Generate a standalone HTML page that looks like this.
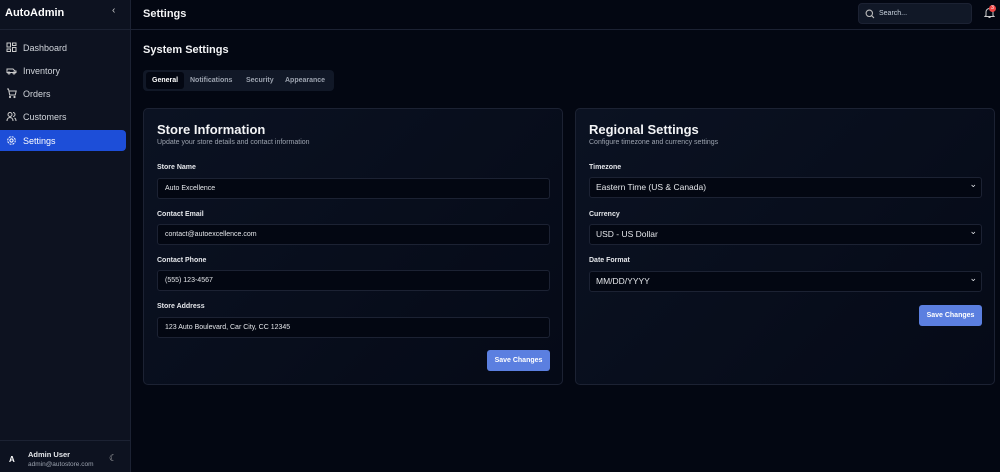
<!DOCTYPE html><html><head><style>
*{box-sizing:border-box;margin:0;padding:0}
body{width:1000px;height:472px;overflow:hidden;background:#030712;font-family:"Liberation Sans",sans-serif;color:#e5e7eb;position:relative}
.sb{position:absolute;left:0;top:0;width:131px;height:472px;background:#0d1220;border-right:1px solid #1c2233}
.abs{position:absolute}
.nav{position:absolute;left:0;width:126px;height:21px;border-radius:0 4px 4px 0;font-size:9px;color:#d1d5db;display:flex;align-items:center;padding-left:23px}
.nav svg{position:absolute;left:6px;top:5px}
.card{position:absolute;top:108px;height:277px;width:420px;border:1px solid #1c2233;border-radius:5px;background:linear-gradient(135deg,#0b1222,#050a17)}
.card h2{position:absolute;left:13px;top:13px;font-size:13px;font-weight:bold;color:#f3f4f6}
.card .sub{position:absolute;left:13px;top:30px;font-size:7px;color:#9ca3af}
.lbl{position:absolute;left:13px;font-size:7px;font-weight:bold;color:#e5e7eb}
.in{position:absolute;left:13px;width:393px;height:21px;border:1px solid #1c2233;border-radius:3px;background:#030712;font-size:7px;color:#e5e7eb;padding-left:7px;line-height:19px}
.sel{font-size:8.5px;padding-left:6px}
.sel::after{content:"⌄";position:absolute;right:4px;top:-3px;font-size:9px}
.btn{position:absolute;width:63px;height:21px;background:#5b7fe0;border-radius:3px;font-size:7px;font-weight:bold;color:#fff;text-align:center;line-height:21px}
</style></head><body>
<div class="sb">
<div class="abs" style="left:5px;top:7px;font-size:11px;font-weight:bold;color:#fff">AutoAdmin</div>
<div class="abs" style="left:112px;top:5px;font-size:10px;color:#ccc">‹</div>
<div class="abs" style="left:0;top:29px;width:130px;border-top:1px solid #1c2233"></div>
<div class="nav" style="top:37px"><svg width="11" height="11" viewBox="0 0 11 11" fill="none" stroke="#ccc" stroke-width="1"><rect x="1" y="1" width="3.5" height="4"/><rect x="6.5" y="1" width="3.5" height="2.5"/><rect x="1" y="7" width="3.5" height="2.5"/><rect x="6.5" y="5.5" width="3.5" height="4"/></svg>Dashboard</div>
<div class="nav" style="top:60px"><svg width="11" height="11" viewBox="0 0 11 11" fill="none" stroke="#ccc" stroke-width="1"><path d="M1 7V4h6l2 2h1v1.5H1z"/><circle cx="3" cy="8" r="1"/><circle cx="8" cy="8" r="1"/></svg>Inventory</div>
<div class="nav" style="top:83px"><svg width="11" height="11" viewBox="0 0 11 11" fill="none" stroke="#ccc" stroke-width="1"><path d="M1 1h1.5l1.2 6h5.5l1-4H3"/><circle cx="4" cy="9" r=".6"/><circle cx="8.5" cy="9" r=".6"/></svg>Orders</div>
<div class="nav" style="top:106px"><svg width="11" height="11" viewBox="0 0 11 11" fill="none" stroke="#ccc" stroke-width="1"><circle cx="4" cy="3.5" r="2"/><path d="M1 10c0-2.5 1.5-3.5 3-3.5s3 1 3 3.5M7 1.5a2 2 0 010 4M8.5 7c1 .5 1.5 1.5 1.5 3"/></svg>Customers</div>
<div class="nav" style="top:130px;background:#1d4ed8;color:#fff"><svg width="11" height="11" viewBox="0 0 11 11" fill="none" stroke="#fff" stroke-width="1"><circle cx="5.5" cy="5.5" r="1.6"/><circle cx="5.5" cy="5.5" r="3.8" stroke-dasharray="2 1"/></svg>Settings</div>
<div class="abs" style="left:0;top:440px;width:130px;border-top:1px solid #1c2233"></div>
<div class="abs" style="left:9px;top:455px;font-size:8px;font-weight:bold;color:#fff">A</div>
<div class="abs" style="left:28px;top:450px;font-size:7.5px;font-weight:bold;color:#e5e7eb">Admin User</div>
<div class="abs" style="left:28px;top:461px;font-size:6.5px;color:#9ca3af">admin@autostore.com</div>
<div class="abs" style="left:109px;top:453px;font-size:9px;color:#bbb">☾</div>
</div>
<div class="abs" style="left:131px;top:29px;width:869px;border-top:1px solid #1c2233"></div>
<div class="abs" style="left:143px;top:8px;font-size:11px;font-weight:bold;color:#f3f4f6">Settings</div>
<div class="abs" style="left:858px;top:3px;width:114px;height:21px;background:#111827;border:1px solid #1c2233;border-radius:4px"><svg class="abs" style="left:6px;top:5px" width="10" height="10" viewBox="0 0 10 10" fill="none" stroke="#bbb" stroke-width="1.1"><circle cx="4.3" cy="4.3" r="3.2"/><path d="M6.7 6.7L9 9"/></svg><span class="abs" style="left:20px;top:6px;font-size:7px;color:#cbd5e1">Search...</span></div>
<svg class="abs" style="left:984px;top:7px" width="11" height="12" viewBox="0 0 11 12" fill="none" stroke="#ccc" stroke-width="1"><path d="M2 8.5V5a3.5 3.5 0 017 0v3.5l1 1H1z M4.5 10.5h2"/></svg>
<div class="abs" style="left:989px;top:5px;width:7px;height:7px;border-radius:50%;background:#ef4444;font-size:5px;color:#fff;text-align:center;line-height:7px">3</div>
<div class="abs" style="left:143px;top:44px;font-size:11px;font-weight:bold;color:#f3f4f6">System Settings</div>
<div class="abs" style="left:143px;top:70px;width:191px;height:21px;background:#111827;border-radius:4px"></div>
<div class="abs" style="left:146px;top:72px;width:38px;height:17px;background:#030712;border-radius:3px"></div>
<div class="abs" style="left:152px;top:77px;font-size:7px;font-weight:bold;color:#fff">General</div>
<div class="abs" style="left:190px;top:77px;font-size:7px;font-weight:bold;color:#9ca3af">Notifications</div>
<div class="abs" style="left:246px;top:77px;font-size:7px;font-weight:bold;color:#9ca3af">Security</div>
<div class="abs" style="left:285px;top:77px;font-size:7px;font-weight:bold;color:#9ca3af">Appearance</div>
<div class="card" style="left:143px">
<h2>Store Information</h2><div class="sub">Update your store details and contact information</div>
<div class="lbl" style="top:55px">Store Name</div><div class="in" style="top:69px">Auto Excellence</div>
<div class="lbl" style="top:102px">Contact Email</div><div class="in" style="top:115px">contact@autoexcellence.com</div>
<div class="lbl" style="top:148px">Contact Phone</div><div class="in" style="top:161px">(555) 123-4567</div>
<div class="lbl" style="top:194px">Store Address</div><div class="in" style="top:208px">123 Auto Boulevard, Car City, CC 12345</div>
<div class="btn" style="left:343px;top:241px">Save Changes</div>
</div>
<div class="card" style="left:575px">
<h2>Regional Settings</h2><div class="sub">Configure timezone and currency settings</div>
<div class="lbl" style="top:55px">Timezone</div><div class="in sel" style="top:68px">Eastern Time (US &amp; Canada)</div>
<div class="lbl" style="top:102px">Currency</div><div class="in sel" style="top:115px">USD - US Dollar</div>
<div class="lbl" style="top:148px">Date Format</div><div class="in sel" style="top:162px">MM/DD/YYYY</div>
<div class="btn" style="left:343px;top:196px">Save Changes</div>
</div>
</body></html>
